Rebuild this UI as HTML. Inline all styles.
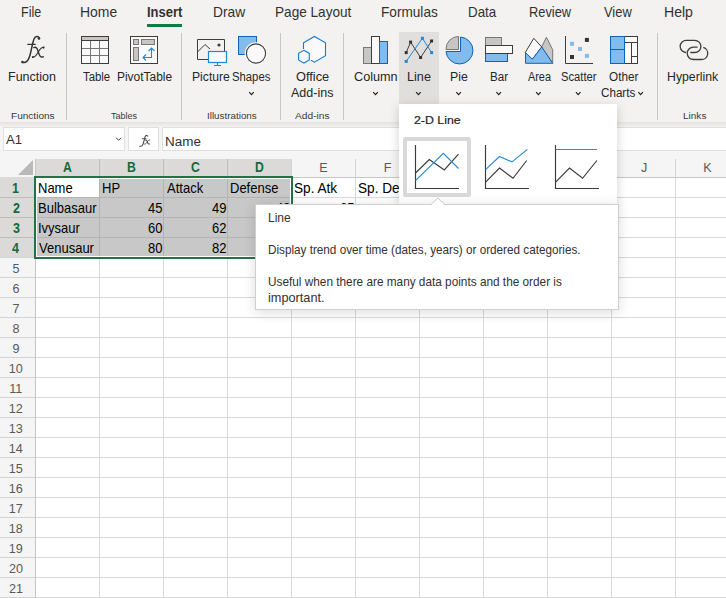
<!DOCTYPE html><html><head><meta charset="utf-8"><style>
*{margin:0;padding:0;box-sizing:border-box}
html,body{width:726px;height:598px;overflow:hidden}body{position:relative;background:#fff;font-family:"Liberation Sans", sans-serif}
.t{position:absolute;white-space:nowrap}.r{position:absolute}svg{position:absolute;overflow:visible}
</style></head><body>
<div class="r" style="left:0px;top:0px;width:726px;height:122px;background:#f3f2f1;"></div>
<div class="r" style="left:0;top:122px;width:726px;height:5px;background:linear-gradient(#e3e2e1,#f3f2f1)"></div>
<div class="r" style="left:0px;top:127px;width:726px;height:32px;background:#f5f5f5;"></div>
<div class="t" style="left:20.88px;top:5.06px;font-size:14.1px;line-height:14.1px;color:#323130;font-weight:normal;transform:scaleX(0.8878);transform-origin:0 0;">File</div>
<div class="t" style="left:79.96px;top:5.06px;font-size:14.1px;line-height:14.1px;color:#323130;font-weight:normal;transform:scaleX(0.9888);transform-origin:0 0;">Home</div>
<div class="t" style="left:146.83px;top:5.06px;font-size:14.1px;line-height:14.1px;color:#323130;font-weight:bold;transform:scaleX(0.9196);transform-origin:0 0;">Insert</div>
<div class="t" style="left:212.97px;top:5.06px;font-size:14.1px;line-height:14.1px;color:#323130;font-weight:normal;transform:scaleX(0.9795);transform-origin:0 0;">Draw</div>
<div class="t" style="left:274.69px;top:5.06px;font-size:14.1px;line-height:14.1px;color:#323130;font-weight:normal;transform:scaleX(0.9653);transform-origin:0 0;">Page Layout</div>
<div class="t" style="left:381.39px;top:5.06px;font-size:14.1px;line-height:14.1px;color:#323130;font-weight:normal;transform:scaleX(0.9667);transform-origin:0 0;">Formulas</div>
<div class="t" style="left:468.01px;top:5.06px;font-size:14.1px;line-height:14.1px;color:#323130;font-weight:normal;transform:scaleX(0.9494);transform-origin:0 0;">Data</div>
<div class="t" style="left:528.95px;top:5.06px;font-size:14.1px;line-height:14.1px;color:#323130;font-weight:normal;transform:scaleX(0.9091);transform-origin:0 0;">Review</div>
<div class="t" style="left:603.85px;top:5.06px;font-size:14.1px;line-height:14.1px;color:#323130;font-weight:normal;transform:scaleX(0.9157);transform-origin:0 0;">View</div>
<div class="t" style="left:663.85px;top:5.06px;font-size:14.1px;line-height:14.1px;color:#323130;font-weight:normal;transform:scaleX(0.9982);transform-origin:0 0;">Help</div>
<div class="r" style="left:147px;top:24px;width:35px;height:3px;background:#107c41;"></div>
<div class="r" style="left:66px;top:33px;width:1px;height:87px;background:#c8c6c4;"></div>
<div class="r" style="left:181px;top:33px;width:1px;height:87px;background:#c8c6c4;"></div>
<div class="r" style="left:280px;top:33px;width:1px;height:87px;background:#c8c6c4;"></div>
<div class="r" style="left:343px;top:33px;width:1px;height:87px;background:#c8c6c4;"></div>
<div class="r" style="left:657px;top:33px;width:1px;height:87px;background:#c8c6c4;"></div>
<div class="r" style="left:399px;top:32px;width:40px;height:71.5px;background:#e1dfdd;"></div>
<div class="t" style="left:8.36px;top:70.84px;font-size:12px;line-height:12px;color:#262626;font-weight:normal;transform:scaleX(1.0441);transform-origin:0 0;">Function</div>
<div class="t" style="left:82.66px;top:70.84px;font-size:12px;line-height:12px;color:#262626;font-weight:normal;transform:scaleX(0.9462);transform-origin:0 0;">Table</div>
<div class="t" style="left:116.60px;top:70.84px;font-size:12px;line-height:12px;color:#262626;font-weight:normal;transform:scaleX(0.9954);transform-origin:0 0;">PivotTable</div>
<div class="t" style="left:191.69px;top:70.84px;font-size:12px;line-height:12px;color:#262626;font-weight:normal;transform:scaleX(1.0126);transform-origin:0 0;">Picture</div>
<div class="t" style="left:231.88px;top:70.84px;font-size:12px;line-height:12px;color:#262626;font-weight:normal;transform:scaleX(0.9421);transform-origin:0 0;">Shapes</div>
<div class="t" style="left:295.71px;top:70.84px;font-size:12px;line-height:12px;color:#262626;font-weight:normal;transform:scaleX(1.0649);transform-origin:0 0;">Office</div>
<div class="t" style="left:291.15px;top:86.84px;font-size:12px;line-height:12px;color:#262626;font-weight:normal;transform:scaleX(1.0423);transform-origin:0 0;">Add-ins</div>
<div class="t" style="left:353.77px;top:70.84px;font-size:12px;line-height:12px;color:#262626;font-weight:normal;transform:scaleX(1.0550);transform-origin:0 0;">Column</div>
<div class="t" style="left:407.15px;top:70.84px;font-size:12px;line-height:12px;color:#262626;font-weight:normal;transform:scaleX(1.0544);transform-origin:0 0;">Line</div>
<div class="t" style="left:449.97px;top:70.84px;font-size:12px;line-height:12px;color:#262626;font-weight:normal;transform:scaleX(1.0253);transform-origin:0 0;">Pie</div>
<div class="t" style="left:490.33px;top:70.84px;font-size:12px;line-height:12px;color:#262626;font-weight:normal;transform:scaleX(0.9657);transform-origin:0 0;">Bar</div>
<div class="t" style="left:527.65px;top:70.84px;font-size:12px;line-height:12px;color:#262626;font-weight:normal;transform:scaleX(0.9051);transform-origin:0 0;">Area</div>
<div class="t" style="left:561.18px;top:70.84px;font-size:12px;line-height:12px;color:#262626;font-weight:normal;transform:scaleX(0.9369);transform-origin:0 0;">Scatter</div>
<div class="t" style="left:609.46px;top:70.84px;font-size:12px;line-height:12px;color:#262626;font-weight:normal;transform:scaleX(0.9778);transform-origin:0 0;">Other</div>
<div class="t" style="left:601.12px;top:86.84px;font-size:12px;line-height:12px;color:#262626;font-weight:normal;transform:scaleX(0.9708);transform-origin:0 0;">Charts</div>
<div class="t" style="left:667.38px;top:70.84px;font-size:12px;line-height:12px;color:#262626;font-weight:normal;transform:scaleX(1.0245);transform-origin:0 0;">Hyperlink</div>
<div class="t" style="left:10.76px;top:110.87px;font-size:9.6px;line-height:9.6px;color:#3b3a39;font-weight:normal;transform:scaleX(1.0482);transform-origin:0 0;">Functions</div>
<div class="t" style="left:111.11px;top:110.87px;font-size:9.6px;line-height:9.6px;color:#3b3a39;font-weight:normal;transform:scaleX(0.9412);transform-origin:0 0;">Tables</div>
<div class="t" style="left:206.58px;top:110.87px;font-size:9.6px;line-height:9.6px;color:#3b3a39;font-weight:normal;transform:scaleX(1.0254);transform-origin:0 0;">Illustrations</div>
<div class="t" style="left:295.20px;top:110.87px;font-size:9.6px;line-height:9.6px;color:#3b3a39;font-weight:normal;transform:scaleX(1.0621);transform-origin:0 0;">Add-ins</div>
<div class="t" style="left:682.86px;top:110.87px;font-size:9.6px;line-height:9.6px;color:#3b3a39;font-weight:normal;transform:scaleX(1.0447);transform-origin:0 0;">Links</div>
<svg style="left:0;top:0" width="726" height="160" viewBox="0 0 726 160"><path d="M249.2 92.2 L251.5 94.60000000000001 L253.8 92.2" fill="none" stroke="#201f1e" stroke-width="1.15"/></svg>
<svg style="left:0;top:0" width="726" height="160" viewBox="0 0 726 160"><path d="M373.2 92.2 L375.5 94.60000000000001 L377.8 92.2" fill="none" stroke="#201f1e" stroke-width="1.15"/></svg>
<svg style="left:0;top:0" width="726" height="160" viewBox="0 0 726 160"><path d="M416.09999999999997 92.2 L418.4 94.60000000000001 L420.7 92.2" fill="none" stroke="#201f1e" stroke-width="1.15"/></svg>
<svg style="left:0;top:0" width="726" height="160" viewBox="0 0 726 160"><path d="M456.3 92.2 L458.6 94.60000000000001 L460.90000000000003 92.2" fill="none" stroke="#201f1e" stroke-width="1.15"/></svg>
<svg style="left:0;top:0" width="726" height="160" viewBox="0 0 726 160"><path d="M496.4 92.2 L498.7 94.60000000000001 L501.0 92.2" fill="none" stroke="#201f1e" stroke-width="1.15"/></svg>
<svg style="left:0;top:0" width="726" height="160" viewBox="0 0 726 160"><path d="M536.1 92.2 L538.4 94.60000000000001 L540.6999999999999 92.2" fill="none" stroke="#201f1e" stroke-width="1.15"/></svg>
<svg style="left:0;top:0" width="726" height="160" viewBox="0 0 726 160"><path d="M575.9000000000001 92.2 L578.2 94.60000000000001 L580.5 92.2" fill="none" stroke="#201f1e" stroke-width="1.15"/></svg>
<svg style="left:0;top:0" width="726" height="160" viewBox="0 0 726 160"><path d="M638.3000000000001 92.2 L640.6 94.60000000000001 L642.9 92.2" fill="none" stroke="#201f1e" stroke-width="1.15"/></svg>
<svg style="left:0;top:0" width="60" height="70" viewBox="0 0 60 70"><g fill="none" stroke="#333" stroke-linecap="round"><path d="M39.2 38.4 C38.6 35.9 35.2 35.8 34 38.9 C32.4 43 31 52.5 29.3 57.3 C28 61 25.4 63.2 22.3 62.3" stroke-width="1.5"/><path d="M27.8 44.3 H35.3" stroke-width="1.2"/><path d="M33.8 47.6 C36.3 46.6 37.2 48.3 38.1 51.2 C39.1 54.8 40.2 58 43.3 56.8" stroke-width="1.4"/><path d="M43.8 47.3 C41.6 47 40 49.2 38.6 51.4 C37 54.2 35.2 57.8 32.6 57.3" stroke-width="1.1"/></g><g fill="#333"><circle cx="39" cy="38.4" r="1.3"/><circle cx="22.4" cy="62" r="1.2"/><circle cx="43.5" cy="47.6" r="1.1"/><circle cx="32.8" cy="57.1" r="1"/></g></svg>
<svg style="left:0px;top:0px" width="726" height="130" viewBox="0 0 726 130"><rect x="81.5" y="36.5" width="27" height="27" fill="#fafafa" stroke="#3d3d3d"/><rect x="82" y="37" width="26" height="3" fill="#c8c6c4"/><path d="M82 40.5 H108" stroke="#3d3d3d"/><path d="M90.5 41 V63 M99.5 41 V63 M82 48.5 H108 M82 55.5 H108" stroke="#777"/><rect x="130.5" y="36.5" width="27" height="27" fill="#fafafa" stroke="#3d3d3d"/><rect x="133.5" y="39.5" width="5" height="5" fill="#c8c6c4" stroke="#777"/><rect x="141.5" y="39.5" width="13" height="5" fill="#c8c6c4" stroke="#777"/><rect x="133.5" y="47.5" width="5" height="13" fill="#c8c6c4" stroke="#777"/><path d="M151.5 48 V57.5 H143 M148.5 51 L151.5 48 L154.5 51 M146 54.5 L143 57.5 L146 60.5" fill="none" stroke="#1f88d8" stroke-width="1.1"/><path d="M208 59.5 H197.5 V39.5 H224.5 V51" fill="none" stroke="#3d3d3d"/><path d="M197.5 52 L205 44.5 L210 49" fill="none" stroke="#3d3d3d"/><circle cx="219" cy="45" r="1.6" fill="#3d3d3d"/><rect x="208.5" y="51.5" width="18" height="11" fill="#fafafa" stroke="#1f88d8" stroke-width="1.2"/><path d="M217.5 63 V65.5 M214 65.5 H221" stroke="#1f88d8" stroke-width="1.2"/><rect x="238.5" y="36.5" width="18" height="18" fill="#82bcec" stroke="#0f63b8"/><circle cx="256" cy="53.5" r="10.3" fill="#fafafa" stroke="#fafafa" stroke-width="2"/><circle cx="256" cy="53.5" r="9.6" fill="#fafafa" stroke="#3d3d3d" stroke-width="1.1"/><path d="M303.5 49 V42.7 L314.4 36.5 L325.5 42.7 V55.8 L314.4 62.2 L311 60.3" fill="#fafafa" stroke="#1a78cc" stroke-width="1.1"/><path d="M303.9 50.3 L309.3 53.4 V60 L303.9 63.1 L298.6 60 V53.4 Z" fill="#fafafa" stroke="#1a78cc" stroke-width="1.1"/><rect x="363.5" y="47.5" width="8" height="16" fill="#c8c6c4" stroke="#777"/><rect x="371.5" y="36.5" width="8" height="27" fill="#fafafa" stroke="#3d3d3d"/><rect x="379.5" y="41.5" width="8" height="22" fill="#82bcec" stroke="#0f63b8"/><path d="M406.2 52.6 L410.6 42.1 L420.6 57.5 L431.6 41" fill="none" stroke="#3d3d3d"/><path d="M406.2 61.4 L422.4 38.3 L431.6 52.6" fill="none" stroke="#1f88d8"/><rect x="404.7" y="51.1" width="3" height="3" fill="#333"/><rect x="409.1" y="40.6" width="3" height="3" fill="#333"/><rect x="419.1" y="56.0" width="3" height="3" fill="#333"/><rect x="430.1" y="39.5" width="3" height="3" fill="#333"/><rect x="404.7" y="59.9" width="3" height="3" fill="#1f88d8"/><rect x="420.9" y="36.8" width="3" height="3" fill="#1f88d8"/><rect x="430.1" y="51.1" width="3" height="3" fill="#1f88d8"/><path d="M460.5 37 A13.5 13.5 0 1 1 446 51.5 L460.5 51.5 Z" fill="#82bcec" stroke="#0f63b8"/><path d="M458.5 36.5 A12.5 12.5 0 0 0 446 49.5 L458.5 49.5 Z" fill="#c8c6c4" stroke="#777"/><rect x="485.5" y="37.5" width="16" height="8" fill="#c8c6c4" stroke="#777"/><rect x="485.5" y="53.5" width="22" height="8" fill="#82bcec" stroke="#0f63b8"/><rect x="485.5" y="45.5" width="27" height="8" fill="#fafafa" stroke="#3d3d3d"/><path d="M541.7 47 L546.4 37.2 L552.7 49.8 V63.3 Z" fill="#c8c6c4" stroke="#777"/><path d="M525.2 52.6 L533.8 38.3 L541.7 47 L532.4 59.2 Z" fill="#fafafa" stroke="#3d3d3d"/><path d="M525.5 52.6 L532.4 59.2 L541.7 47 L552.7 63.3 H525.5 Z" fill="#82bcec" stroke="#0f63b8"/><path d="M565.5 36 V63.5 H593" fill="none" stroke="#3d3d3d"/><rect x="584.9" y="37.9" width="4" height="4" fill="#333"/><rect x="570" y="55" width="4" height="4" fill="#333"/><rect x="570" y="41.8" width="4" height="4" fill="#82bcec"/><rect x="578" y="47" width="4" height="4" fill="#82bcec"/><rect x="584.9" y="53.9" width="4" height="4" fill="#82bcec"/><rect x="610.5" y="36.5" width="27" height="27" fill="#fafafa" stroke="#3d3d3d"/><rect x="610.5" y="36.5" width="14" height="27" fill="#82bcec" stroke="#0f63b8"/><path d="M611 49.5 H624" stroke="#0f63b8"/><path d="M625 42.5 H637 M631.5 43 V63 M632 56.5 H637" stroke="#3d3d3d"/><path d="M690.3 52.5 H694.8 A6.1 6.1 0 0 0 694.8 40.3 H686.5 A6.1 6.1 0 0 0 686 52.5" fill="none" stroke="#3d3d3d" stroke-width="1.3"/><path d="M697.6 47.2 H693.35 A6.15 6.15 0 0 0 693.35 59.5 H701.55 A6.15 6.15 0 0 0 703.3 47.45" fill="none" stroke="#3d3d3d" stroke-width="1.3"/></svg>
<div class="r" style="left:3px;top:127px;width:122px;height:24px;background:#fff;border:1px solid #e1dfdd"></div>
<div class="t" style="left:6.15px;top:134.25px;font-size:12.7px;line-height:12.7px;color:#323130;font-weight:normal;transform:scaleX(1.0370);transform-origin:0 0;">A1</div>
<svg style="left:0;top:0" width="726" height="160" viewBox="0 0 726 160"><path d="M116.1 137.7 L118.6 140.3 L121.1 137.7" fill="none" stroke="#444" stroke-width="1.0"/></svg>
<div class="r" style="left:128px;top:127px;width:31px;height:24px;background:#fff;border:1px solid #e1dfdd"></div>
<svg style="left:120px;top:125px" width="40" height="30" viewBox="120 125 40 30"><g transform="translate(139 135.2) scale(0.47 0.42) translate(-20.7 -36)"><g fill="none" stroke="#444" stroke-linecap="round"><path d="M39.2 38.4 C38.6 35.9 35.2 35.8 34 38.9 C32.4 43 31 52.5 29.3 57.3 C28 61 25.4 63.2 22.3 62.3" stroke-width="2.4"/><path d="M27.8 44.3 H35.3" stroke-width="2"/><path d="M33.8 47.6 C36.3 46.6 37.2 48.3 38.1 51.2 C39.1 54.8 40.2 58 43.3 56.8" stroke-width="2.3"/><path d="M43.8 47.3 C41.6 47 40 49.2 38.6 51.4 C37 54.2 35.2 57.8 32.6 57.3" stroke-width="2"/></g></g></svg>
<div class="r" style="left:162px;top:127px;width:564px;height:24px;background:#fff;border:1px solid #e1dfdd;border-right:none"></div>
<div class="t" style="left:164.72px;top:136.42px;font-size:12.5px;line-height:12.5px;color:#323130;font-weight:normal;transform:scaleX(1.0755);transform-origin:0 0;">Name</div>
<div class="r" style="left:0px;top:159px;width:726px;height:439px;background:#f5f5f5;"></div>
<div class="r" style="left:36px;top:178px;width:690px;height:420px;background:#fff;"></div>
<svg style="left:0px;top:150px" width="50" height="30" viewBox="0 150 50 30"><path d="M18 175 L33 175 L33 160 Z" fill="#b9b9b9"/></svg>
<div class="r" style="left:35px;top:159px;width:257px;height:17px;background:#dbdad9;"></div>
<div class="r" style="left:0px;top:177px;width:35px;height:80px;background:#dbdad9;"></div>
<svg style="left:0px;top:0px" width="726" height="598" viewBox="0 0 726 598"><rect x="35" y="178" width="1" height="420" fill="#dadada"/><rect x="99" y="178" width="1" height="420" fill="#dadada"/><rect x="99" y="159" width="1" height="18" fill="#bdbdbd"/><rect x="163" y="178" width="1" height="420" fill="#dadada"/><rect x="163" y="159" width="1" height="18" fill="#bdbdbd"/><rect x="227" y="178" width="1" height="420" fill="#dadada"/><rect x="227" y="159" width="1" height="18" fill="#bdbdbd"/><rect x="291" y="178" width="1" height="420" fill="#dadada"/><rect x="291" y="159" width="1" height="18" fill="#d4d4d4"/><rect x="355" y="178" width="1" height="420" fill="#dadada"/><rect x="355" y="159" width="1" height="18" fill="#d4d4d4"/><rect x="419" y="178" width="1" height="420" fill="#dadada"/><rect x="419" y="159" width="1" height="18" fill="#d4d4d4"/><rect x="483" y="178" width="1" height="420" fill="#dadada"/><rect x="483" y="159" width="1" height="18" fill="#d4d4d4"/><rect x="547" y="178" width="1" height="420" fill="#dadada"/><rect x="547" y="159" width="1" height="18" fill="#d4d4d4"/><rect x="611" y="178" width="1" height="420" fill="#dadada"/><rect x="611" y="159" width="1" height="18" fill="#d4d4d4"/><rect x="675" y="178" width="1" height="420" fill="#dadada"/><rect x="675" y="159" width="1" height="18" fill="#d4d4d4"/><rect x="36" y="177" width="690" height="1" fill="#dadada"/><rect x="36" y="197" width="690" height="1" fill="#dadada"/><rect x="0" y="197" width="35" height="1" fill="#bdbdbd"/><rect x="36" y="217" width="690" height="1" fill="#dadada"/><rect x="0" y="217" width="35" height="1" fill="#bdbdbd"/><rect x="36" y="237" width="690" height="1" fill="#dadada"/><rect x="0" y="237" width="35" height="1" fill="#bdbdbd"/><rect x="36" y="257" width="690" height="1" fill="#dadada"/><rect x="0" y="257" width="35" height="1" fill="#d4d4d4"/><rect x="36" y="277" width="690" height="1" fill="#dadada"/><rect x="0" y="277" width="35" height="1" fill="#d4d4d4"/><rect x="36" y="297" width="690" height="1" fill="#dadada"/><rect x="0" y="297" width="35" height="1" fill="#d4d4d4"/><rect x="36" y="317" width="690" height="1" fill="#dadada"/><rect x="0" y="317" width="35" height="1" fill="#d4d4d4"/><rect x="36" y="337" width="690" height="1" fill="#dadada"/><rect x="0" y="337" width="35" height="1" fill="#d4d4d4"/><rect x="36" y="357" width="690" height="1" fill="#dadada"/><rect x="0" y="357" width="35" height="1" fill="#d4d4d4"/><rect x="36" y="377" width="690" height="1" fill="#dadada"/><rect x="0" y="377" width="35" height="1" fill="#d4d4d4"/><rect x="36" y="397" width="690" height="1" fill="#dadada"/><rect x="0" y="397" width="35" height="1" fill="#d4d4d4"/><rect x="36" y="417" width="690" height="1" fill="#dadada"/><rect x="0" y="417" width="35" height="1" fill="#d4d4d4"/><rect x="36" y="437" width="690" height="1" fill="#dadada"/><rect x="0" y="437" width="35" height="1" fill="#d4d4d4"/><rect x="36" y="457" width="690" height="1" fill="#dadada"/><rect x="0" y="457" width="35" height="1" fill="#d4d4d4"/><rect x="36" y="477" width="690" height="1" fill="#dadada"/><rect x="0" y="477" width="35" height="1" fill="#d4d4d4"/><rect x="36" y="497" width="690" height="1" fill="#dadada"/><rect x="0" y="497" width="35" height="1" fill="#d4d4d4"/><rect x="36" y="517" width="690" height="1" fill="#dadada"/><rect x="0" y="517" width="35" height="1" fill="#d4d4d4"/><rect x="36" y="537" width="690" height="1" fill="#dadada"/><rect x="0" y="537" width="35" height="1" fill="#d4d4d4"/><rect x="36" y="557" width="690" height="1" fill="#dadada"/><rect x="0" y="557" width="35" height="1" fill="#d4d4d4"/><rect x="36" y="577" width="690" height="1" fill="#dadada"/><rect x="0" y="577" width="35" height="1" fill="#d4d4d4"/><rect x="36" y="597" width="690" height="1" fill="#dadada"/><rect x="0" y="597" width="35" height="1" fill="#d4d4d4"/><rect x="35" y="177" width="691" height="1" fill="#c6c6c6"/><rect x="35" y="159" width="1" height="439" fill="#c6c6c6"/></svg>
<div class="t" style="left:63.40px;top:161.23px;font-size:13.9px;line-height:13.9px;color:#17693b;font-weight:bold;transform:scaleX(0.8800);transform-origin:0 0;">A</div>
<div class="t" style="left:127.27px;top:161.23px;font-size:13.9px;line-height:13.9px;color:#17693b;font-weight:bold;transform:scaleX(0.8800);transform-origin:0 0;">B</div>
<div class="t" style="left:191.31px;top:161.23px;font-size:13.9px;line-height:13.9px;color:#17693b;font-weight:bold;transform:scaleX(0.8800);transform-origin:0 0;">C</div>
<div class="t" style="left:255.25px;top:161.23px;font-size:13.9px;line-height:13.9px;color:#17693b;font-weight:bold;transform:scaleX(0.8800);transform-origin:0 0;">D</div>
<div class="t" style="left:319.35px;top:162.33px;font-size:12.6px;line-height:12.6px;color:#595959;font-weight:normal;">E</div>
<div class="t" style="left:383.68px;top:162.33px;font-size:12.6px;line-height:12.6px;color:#595959;font-weight:normal;">F</div>
<div class="t" style="left:447.05px;top:162.33px;font-size:12.6px;line-height:12.6px;color:#595959;font-weight:normal;">G</div>
<div class="t" style="left:511.22px;top:162.33px;font-size:12.6px;line-height:12.6px;color:#595959;font-weight:normal;">H</div>
<div class="t" style="left:578.05px;top:162.33px;font-size:12.6px;line-height:12.6px;color:#595959;font-weight:normal;">I</div>
<div class="t" style="left:641.02px;top:162.33px;font-size:12.6px;line-height:12.6px;color:#595959;font-weight:normal;">J</div>
<div class="t" style="left:703.15px;top:162.33px;font-size:12.6px;line-height:12.6px;color:#595959;font-weight:normal;">K</div>
<div class="t" style="left:12.31px;top:182.23px;font-size:13.9px;line-height:13.9px;color:#17693b;font-weight:bold;transform:scaleX(0.9000);transform-origin:0 0;">1</div>
<div class="t" style="left:12.54px;top:202.23px;font-size:13.9px;line-height:13.9px;color:#17693b;font-weight:bold;transform:scaleX(0.9000);transform-origin:0 0;">2</div>
<div class="t" style="left:12.60px;top:222.23px;font-size:13.9px;line-height:13.9px;color:#17693b;font-weight:bold;transform:scaleX(0.9000);transform-origin:0 0;">3</div>
<div class="t" style="left:12.47px;top:242.23px;font-size:13.9px;line-height:13.9px;color:#17693b;font-weight:bold;transform:scaleX(0.9000);transform-origin:0 0;">4</div>
<div class="t" style="left:12.50px;top:263.33px;font-size:12.6px;line-height:12.6px;color:#595959;font-weight:normal;">5</div>
<div class="t" style="left:12.45px;top:283.33px;font-size:12.6px;line-height:12.6px;color:#595959;font-weight:normal;">6</div>
<div class="t" style="left:12.47px;top:303.33px;font-size:12.6px;line-height:12.6px;color:#595959;font-weight:normal;">7</div>
<div class="t" style="left:12.50px;top:323.33px;font-size:12.6px;line-height:12.6px;color:#595959;font-weight:normal;">8</div>
<div class="t" style="left:12.50px;top:343.33px;font-size:12.6px;line-height:12.6px;color:#595959;font-weight:normal;">9</div>
<div class="t" style="left:8.78px;top:363.33px;font-size:12.6px;line-height:12.6px;color:#595959;font-weight:normal;">10</div>
<div class="t" style="left:9.30px;top:383.33px;font-size:12.6px;line-height:12.6px;color:#595959;font-weight:normal;">11</div>
<div class="t" style="left:8.82px;top:403.33px;font-size:12.6px;line-height:12.6px;color:#595959;font-weight:normal;">12</div>
<div class="t" style="left:8.80px;top:423.33px;font-size:12.6px;line-height:12.6px;color:#595959;font-weight:normal;">13</div>
<div class="t" style="left:8.70px;top:443.33px;font-size:12.6px;line-height:12.6px;color:#595959;font-weight:normal;">14</div>
<div class="t" style="left:8.78px;top:463.33px;font-size:12.6px;line-height:12.6px;color:#595959;font-weight:normal;">15</div>
<div class="t" style="left:8.80px;top:483.33px;font-size:12.6px;line-height:12.6px;color:#595959;font-weight:normal;">16</div>
<div class="t" style="left:8.82px;top:503.33px;font-size:12.6px;line-height:12.6px;color:#595959;font-weight:normal;">17</div>
<div class="t" style="left:8.80px;top:523.33px;font-size:12.6px;line-height:12.6px;color:#595959;font-weight:normal;">18</div>
<div class="t" style="left:8.82px;top:543.33px;font-size:12.6px;line-height:12.6px;color:#595959;font-weight:normal;">19</div>
<div class="t" style="left:8.92px;top:563.33px;font-size:12.6px;line-height:12.6px;color:#595959;font-weight:normal;">20</div>
<div class="t" style="left:8.97px;top:583.33px;font-size:12.6px;line-height:12.6px;color:#595959;font-weight:normal;">21</div>
<div class="r" style="left:36px;top:178px;width:255px;height:79px;background:#c8c8c8;"></div>
<div class="r" style="left:36px;top:178px;width:63px;height:19px;background:#fff;"></div>
<svg style="left:0px;top:0px" width="726" height="598" viewBox="0 0 726 598"><rect x="99" y="178" width="1" height="79" fill="#b4b4b4"/><rect x="163" y="178" width="1" height="79" fill="#b4b4b4"/><rect x="227" y="178" width="1" height="79" fill="#b4b4b4"/><rect x="36" y="197" width="255" height="1" fill="#b4b4b4"/><rect x="36" y="217" width="255" height="1" fill="#b4b4b4"/><rect x="36" y="237" width="255" height="1" fill="#b4b4b4"/></svg>
<div class="r" style="left:34px;top:176px;width:259px;height:83px;background:transparent;border:2px solid #217346"></div>
<div class="r" style="left:36px;top:178px;width:255px;height:79px;background:transparent;border:1px solid #fff"></div>
<div class="t" style="left:37.52px;top:182.23px;font-size:13.9px;line-height:13.9px;color:#000;font-weight:normal;transform:scaleX(0.9360);transform-origin:0 0;">Name</div>
<div class="t" style="left:101.52px;top:182.23px;font-size:13.9px;line-height:13.9px;color:#000;font-weight:normal;transform:scaleX(0.9360);transform-origin:0 0;">HP</div>
<div class="t" style="left:166.55px;top:182.23px;font-size:13.9px;line-height:13.9px;color:#000;font-weight:normal;transform:scaleX(0.9360);transform-origin:0 0;">Attack</div>
<div class="t" style="left:229.52px;top:182.23px;font-size:13.9px;line-height:13.9px;color:#000;font-weight:normal;transform:scaleX(0.9360);transform-origin:0 0;">Defense</div>
<div class="t" style="left:293.96px;top:182.23px;font-size:13.9px;line-height:13.9px;color:#000;font-weight:normal;transform:scaleX(0.9800);transform-origin:0 0;">Sp. Atk</div>
<div class="t" style="left:357.96px;top:182.23px;font-size:13.9px;line-height:13.9px;color:#000;font-weight:normal;transform:scaleX(0.9800);transform-origin:0 0;">Sp. Def</div>
<div class="t" style="left:37.52px;top:202.23px;font-size:13.9px;line-height:13.9px;color:#000;font-weight:normal;transform:scaleX(0.9360);transform-origin:0 0;">Bulbasaur</div>
<div class="t" style="left:148.25px;top:202.23px;font-size:13.9px;line-height:13.9px;color:#000;font-weight:normal;transform:scaleX(0.9360);transform-origin:0 0;">45</div>
<div class="t" style="left:212.30px;top:202.23px;font-size:13.9px;line-height:13.9px;color:#000;font-weight:normal;transform:scaleX(0.9360);transform-origin:0 0;">49</div>
<div class="t" style="left:276.30px;top:202.23px;font-size:13.9px;line-height:13.9px;color:#000;font-weight:normal;transform:scaleX(0.9360);transform-origin:0 0;">49</div>
<div class="t" style="left:340.25px;top:202.23px;font-size:13.9px;line-height:13.9px;color:#000;font-weight:normal;transform:scaleX(0.9360);transform-origin:0 0;">65</div>
<div class="t" style="left:404.25px;top:202.23px;font-size:13.9px;line-height:13.9px;color:#000;font-weight:normal;transform:scaleX(0.9360);transform-origin:0 0;">65</div>
<div class="t" style="left:38.48px;top:222.23px;font-size:13.9px;line-height:13.9px;color:#000;font-weight:normal;transform:scaleX(0.9360);transform-origin:0 0;">Ivysaur</div>
<div class="t" style="left:148.21px;top:222.23px;font-size:13.9px;line-height:13.9px;color:#000;font-weight:normal;transform:scaleX(0.9360);transform-origin:0 0;">60</div>
<div class="t" style="left:212.35px;top:222.23px;font-size:13.9px;line-height:13.9px;color:#000;font-weight:normal;transform:scaleX(0.9360);transform-origin:0 0;">62</div>
<div class="t" style="left:276.30px;top:222.23px;font-size:13.9px;line-height:13.9px;color:#000;font-weight:normal;transform:scaleX(0.9360);transform-origin:0 0;">63</div>
<div class="t" style="left:340.21px;top:222.23px;font-size:13.9px;line-height:13.9px;color:#000;font-weight:normal;transform:scaleX(0.9360);transform-origin:0 0;">80</div>
<div class="t" style="left:404.21px;top:222.23px;font-size:13.9px;line-height:13.9px;color:#000;font-weight:normal;transform:scaleX(0.9360);transform-origin:0 0;">80</div>
<div class="t" style="left:38.55px;top:242.23px;font-size:13.9px;line-height:13.9px;color:#000;font-weight:normal;transform:scaleX(0.9360);transform-origin:0 0;">Venusaur</div>
<div class="t" style="left:148.21px;top:242.23px;font-size:13.9px;line-height:13.9px;color:#000;font-weight:normal;transform:scaleX(0.9360);transform-origin:0 0;">80</div>
<div class="t" style="left:212.35px;top:242.23px;font-size:13.9px;line-height:13.9px;color:#000;font-weight:normal;transform:scaleX(0.9360);transform-origin:0 0;">82</div>
<div class="t" style="left:276.30px;top:242.23px;font-size:13.9px;line-height:13.9px;color:#000;font-weight:normal;transform:scaleX(0.9360);transform-origin:0 0;">83</div>
<div class="t" style="left:333.00px;top:242.23px;font-size:13.9px;line-height:13.9px;color:#000;font-weight:normal;transform:scaleX(0.9360);transform-origin:0 0;">100</div>
<div class="t" style="left:397.00px;top:242.23px;font-size:13.9px;line-height:13.9px;color:#000;font-weight:normal;transform:scaleX(0.9360);transform-origin:0 0;">100</div>
<div class="r" style="left:399px;top:104px;width:218px;height:100px;background:#fff;box-shadow:0 3px 10px rgba(0,0,0,0.18)"></div>
<div class="t" style="left:413.87px;top:114.10px;font-size:11.7px;line-height:11.7px;color:#252423;font-weight:normal;transform:scaleX(1.0557);transform-origin:0 0;-webkit-text-stroke:0.2px #252423">2-D Line</div>
<div class="r" style="left:403px;top:137px;width:68px;height:60px;background:#fff;border:4px solid #d9d9d9;border-radius:2px"></div>
<svg style="left:390px;top:130px" width="240" height="70" viewBox="390 130 240 70"><path d="M415.5 145 V188.5 H459" fill="none" stroke="#3a3a3a" stroke-width="1.15"/><path d="M485.5 145 V188.5 H529" fill="none" stroke="#3a3a3a" stroke-width="1.15"/><path d="M555.5 145 V188.5 H599" fill="none" stroke="#3a3a3a" stroke-width="1.15"/><path d="M415.5 173 L429.3 159.5 L444.3 170 L458.5 154.2" fill="none" stroke="#3a3a3a" stroke-width="1.15"/><path d="M415.5 180.6 L443.3 153.3 L458.5 168.5" fill="none" stroke="#2a8bd4" stroke-width="1.15"/><path d="M485.6 169.6 L499.5 156.5 L512 161.9 L527.4 149.4" fill="none" stroke="#2a8bd4" stroke-width="1.15"/><path d="M485.6 182.1 L499.5 168.1 L513 178.3 L526.7 160.5" fill="none" stroke="#3a3a3a" stroke-width="1.15"/><path d="M555.6 149.5 H597" fill="none" stroke="#2a8bd4" stroke-width="1.15"/><path d="M555.6 182.1 L569.5 168.1 L582.6 178.3 L596.9 160.5" fill="none" stroke="#3a3a3a" stroke-width="1.15"/></svg>
<div class="r" style="left:255px;top:204px;width:364px;height:106px;background:#fff;border:1px solid #cfcfcf;box-shadow:0 2px 12px rgba(0,0,0,0.14)"></div>
<svg style="left:420px;top:190px" width="40" height="20" viewBox="420 190 40 20"><path d="M431 204.5 L438 198 L445 204.5" fill="#fff" stroke="#c8c8c8"/><rect x="432" y="204" width="12" height="2" fill="#fff"/></svg>
<div class="t" style="left:267.82px;top:211.67px;font-size:12.2px;line-height:12.2px;color:#323130;font-weight:normal;transform:scaleX(0.9838);transform-origin:0 0;">Line</div>
<div class="t" style="left:267.86px;top:244.93px;font-size:11.9px;line-height:11.9px;color:#323130;font-weight:normal;transform:scaleX(0.9854);transform-origin:0 0;">Display trend over time (dates, years) or ordered categories.</div>
<div class="t" style="left:268.01px;top:276.93px;font-size:11.9px;line-height:11.9px;color:#323130;font-weight:normal;transform:scaleX(0.9925);transform-origin:0 0;">Useful when there are many data points and the order is</div>
<div class="t" style="left:268.04px;top:292.93px;font-size:11.9px;line-height:11.9px;color:#323130;font-weight:normal;transform:scaleX(1.0706);transform-origin:0 0;">important.</div>
</body></html>
